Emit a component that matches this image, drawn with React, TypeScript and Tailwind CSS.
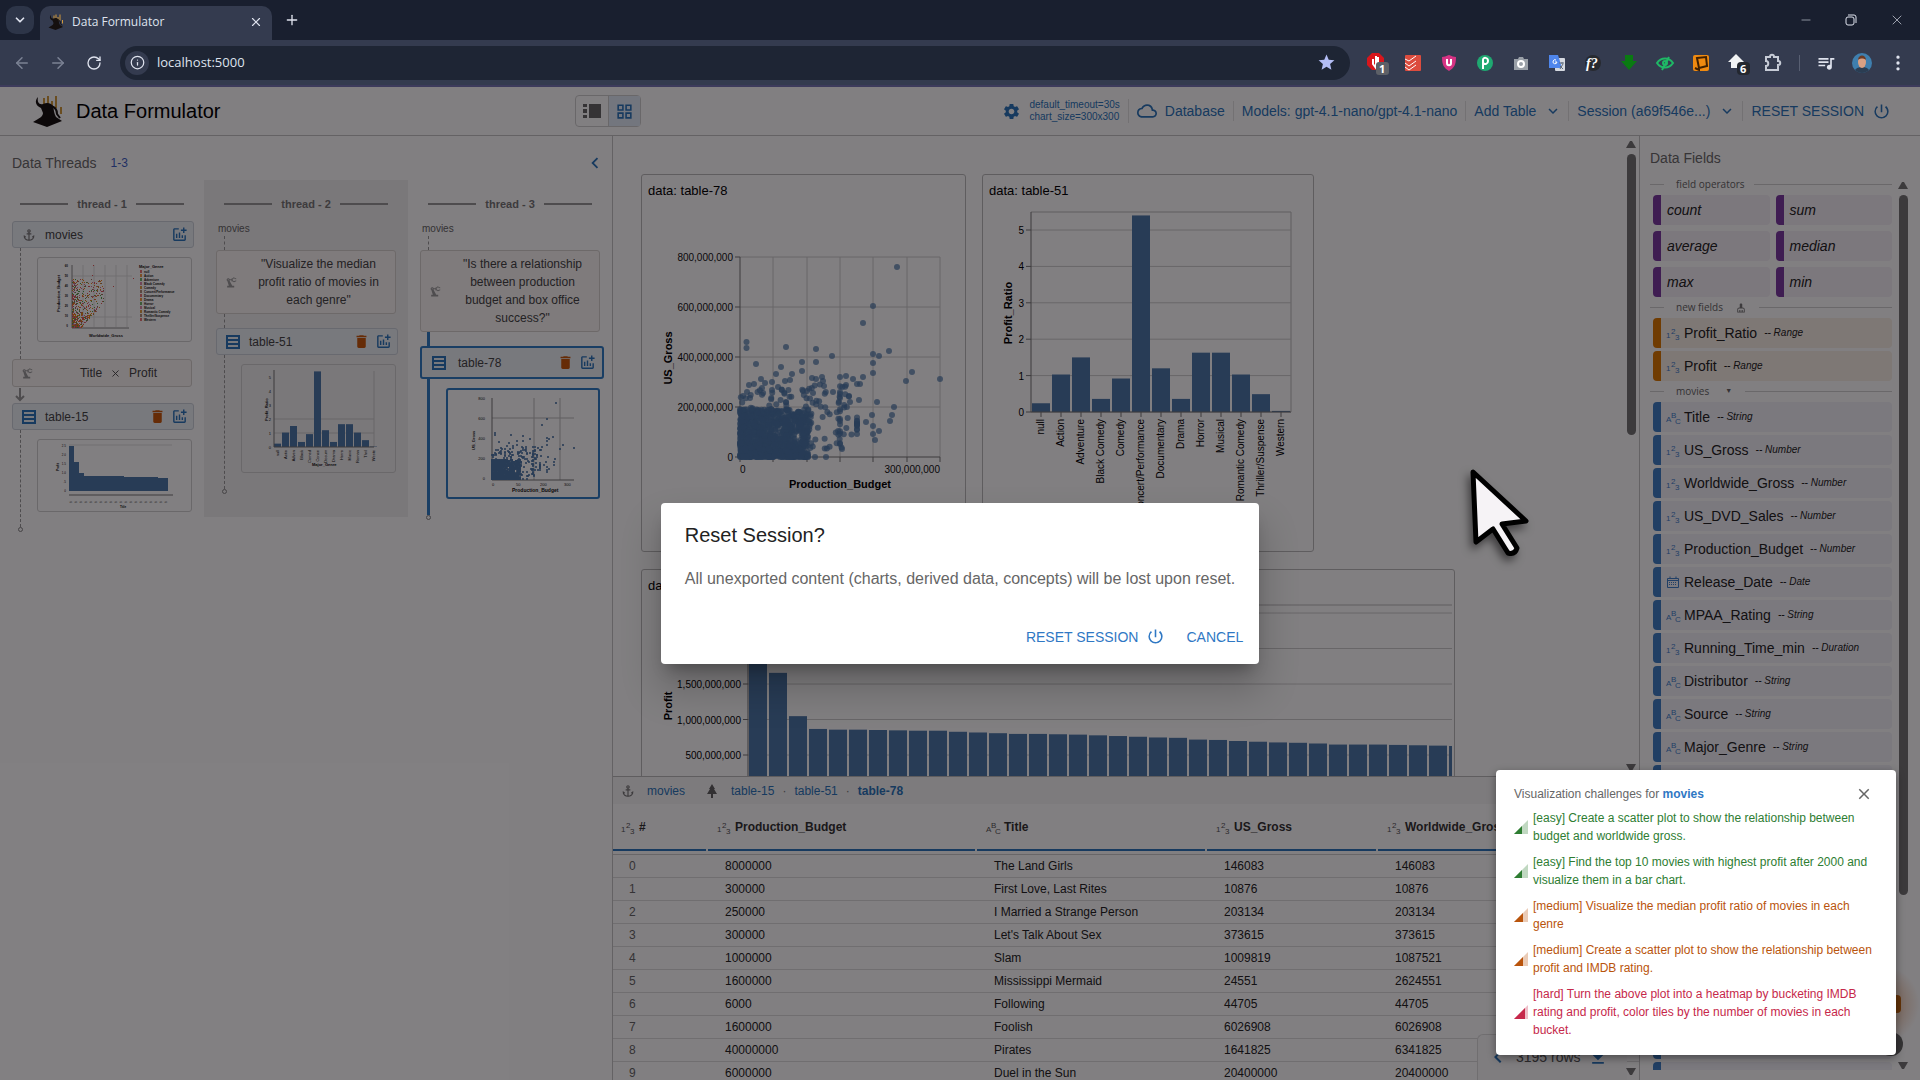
import React from 'react';
import {
  MdAddchart,
  MdAnchor,
  MdChevronLeft,
  MdCleaningServices,
  MdClose,
  MdCloudQueue,
  MdDelete,
  MdFileDownload,
  MdGridView,
  MdKeyboardArrowDown,
  MdPowerSettingsNew,
  MdPrecisionManufacturing,
  MdQueueMusic,
  MdSettings,
  MdStar,
} from 'react-icons/md';
import { ArrowLeft, ArrowRight, ChevronDown, Info, Minus, MoreVertical, Plus, RotateCw, X } from 'lucide-react';

type FieldType = 'number' | 'string' | 'date';

interface Field {
  name: string;
  hint: string;
  type: FieldType;
}

const BAR = '#4c78a8';

const movieFields: Field[] = [
  { name: 'Title', hint: 'String', type: 'string' },
  { name: 'US_Gross', hint: 'Number', type: 'number' },
  { name: 'Worldwide_Gross', hint: 'Number', type: 'number' },
  { name: 'US_DVD_Sales', hint: 'Number', type: 'number' },
  { name: 'Production_Budget', hint: 'Number', type: 'number' },
  { name: 'Release_Date', hint: 'Date', type: 'date' },
  { name: 'MPAA_Rating', hint: 'String', type: 'string' },
  { name: 'Running_Time_min', hint: 'Duration', type: 'number' },
  { name: 'Distributor', hint: 'String', type: 'string' },
  { name: 'Source', hint: 'String', type: 'string' },
  { name: 'Major_Genre', hint: 'String', type: 'string' },
];

const newFields: Field[] = [
  { name: 'Profit_Ratio', hint: 'Range', type: 'number' },
  { name: 'Profit', hint: 'Range', type: 'number' },
];

const rows = [
  ['8000000', 'The Land Girls', '146083', '146083'],
  ['300000', 'First Love, Last Rites', '10876', '10876'],
  ['250000', 'I Married a Strange Person', '203134', '203134'],
  ['300000', "Let's Talk About Sex", '373615', '373615'],
  ['1000000', 'Slam', '1009819', '1087521'],
  ['1600000', 'Mississippi Mermaid', '24551', '2624551'],
  ['6000', 'Following', '44705', '44705'],
  ['1600000', 'Foolish', '6026908', '6026908'],
  ['40000000', 'Pirates', '1641825', '6341825'],
  ['6000000', 'Duel in the Sun', '20400000', '20400000'],
];

const genres: [string, number][] = [
  ['null', 0.24], ['Action', 1.03], ['Adventure', 1.5], ['Black Comedy', 0.36], ['Comedy', 0.92],
  ['Concert/Performance', 5.4], ['Documentary', 1.2], ['Drama', 0.36], ['Horror', 1.63], ['Musical', 1.63],
  ['Romantic Comedy', 1.03], ['Thriller/Suspense', 0.49], ['Western', 0.03],
];

// billions, sorted descending
const profits = [
  2.52, 1.65, 1.04, 0.86, 0.85, 0.85, 0.845, 0.84, 0.835, 0.835, 0.82, 0.81, 0.8, 0.79, 0.79, 0.785, 0.78, 0.77,
  0.76, 0.75, 0.74, 0.735, 0.71, 0.705, 0.69, 0.68, 0.67, 0.665, 0.655, 0.64, 0.64, 0.64, 0.635, 0.63, 0.625, 0.62,
];

const challenges = [
  { level: 'easy', text: 'Create a scatter plot to show the relationship between budget and worldwide gross.' },
  { level: 'easy', text: 'Find the top 10 movies with highest profit after 2000 and visualize them in a bar chart.' },
  { level: 'medium', text: 'Visualize the median profit ratio of movies in each genre' },
  { level: 'medium', text: 'Create a scatter plot to show the relationship between profit and IMDB rating.' },
  { level: 'hard', text: 'Turn the above plot into a heatmap by bucketing IMDB rating and profit, color tiles by the number of movies in each bucket.' },
];

const levelColor: Record<string, string> = {
  easy: 'text-[#2e7d32]',
  medium: 'text-[#b9540c]',
  hard: 'text-[#c6284a]',
};

const levelWidth: Record<string, number> = { easy: 8, medium: 9, hard: 11 };

function makeRandom(seed: number) {
  let s = seed;
  return () => {
    s = (s * 16807) % 2147483647;
    return s / 2147483647;
  };
}

// points on a 200 x 200 plot, y measured from the top
const outliers = [
  [157, 10], [133, 49], [123, 66], [6.5, 85], [6.5, 91], [46, 90], [76, 92], [92, 99], [76, 105], [149, 94], [133, 97],
  [139, 99], [133, 106], [133, 116], [172, 115], [166, 124], [200, 122], [16, 107], [41, 110], [62, 105], [62, 114],
  [36, 117], [52, 117], [21, 122], [100, 120], [106, 119], [113, 122], [123, 120], [120, 127], [137, 145], [154, 150],
  [152, 158], [150, 164], [139, 174], [135, 183], [132, 158], [133, 169], [133, 177], [126, 165], [102, 192], [86, 200],
  [75, 200], [45, 124], [50, 123], [25, 126], [32, 125], [14, 127], [9, 128], [32, 133], [38, 130], [22, 131],
  [72, 121], [76, 122], [82, 120], [83, 124], [84, 129], [106, 128], [117, 127], [7, 135], [3, 139], [10, 141],
  [93, 135], [100, 135], [109, 139], [119, 143], [110, 145], [63, 134], [67, 134], [73, 136],
];

function buildScatter() {
  const rnd = makeRandom(77);
  const pts = outliers.map((p) => [...p]);
  for (let i = 0; i < 1000; i++) {
    pts.push([Math.pow(rnd(), 1.2) * 68, 200 - Math.pow(rnd(), 1.7) * 48]);
  }
  for (let i = 0; i < 110; i++) {
    pts.push([rnd() * 72, 200 - 30 - Math.pow(rnd(), 2) * 38]);
  }
  for (let i = 0; i < 55; i++) {
    pts.push([66 + Math.pow(rnd(), 1.3) * 48, 200 - 8 - rnd() * 66]);
  }
  for (let i = 0; i < 12; i++) {
    pts.push([100, 128 + rnd() * 60]);
    pts.push([117, 160 + rnd() * 18]);
  }
  return pts;
}

const scatter = buildScatter();

/* ---------- small drawings ---------- */

function WizardLogo({ size }: { size: number }) {
  return (
    <svg width={size} height={size} viewBox="0 0 32 32" aria-hidden="true">
      <g stroke="#d19a3d" strokeWidth="2" fill="none">
        <path d="M12 3v7M16 1v8M20 6v7M24 1v12M29 12v7" />
      </g>
      <path d="M6 2C2 6 4 11 9 13l2 5c0 3-3 5-5 6l-5 3 14 5 15-6-6-4c-2-3-2-7-3-11-2-3-6-4-10-2C7 10 5 7 6 2Z" fill="#15100f" />
      <path d="M19 11c4 1 6 4 6 8l3 4" stroke="#15100f" strokeWidth="2" fill="none" />
    </svg>
  );
}

function TableIcon() {
  return (
    <svg width="14" height="14" viewBox="0 0 14 14" fill="none" stroke="#2a74ba" strokeWidth="2" className="shrink-0" aria-hidden="true">
      <path d="M1 1h12v12H1ZM1 5h12M1 9h12" />
    </svg>
  );
}

function TypeIcon({ type, className }: { type: FieldType; className: string }) {
  if (type === 'date') {
    return (
      <svg width="13" height="12" viewBox="0 0 13 12" className={`shrink-0 ${className}`} fill="none" stroke="currentColor" aria-hidden="true">
        <path d="M.5 2.500h11v9H.5ZM.5 4.500h11M3 .5v2M9 .5v2" />
        <path d="M2 6.500h8M2 8.500h8" strokeDasharray="1 1" />
      </svg>
    );
  }
  const [a, b, c] = type === 'number' ? ['1', '2', '3'] : ['A', 'B', 'C'];
  return (
    <svg width="13" height="14" viewBox="0 0 13 14" className={`shrink-0 overflow-visible fill-current font-normal ${className}`} aria-hidden="true">
      <text x="-1" y="12" fontSize="8">{a}</text>
      <text x="4" y="8" fontSize="8">{b}</text>
      <text x="8" y="14" fontSize="8">{c}</text>
    </svg>
  );
}

function PineTree() {
  return (
    <svg width="12" height="14" viewBox="0 0 12 14" className="fill-[#616161]" aria-hidden="true">
      <path d="M6 0 9 5H8l3 5H7v4H5v-4H1l3-5H3Z" />
    </svg>
  );
}

function Wedge({ level }: { level: string }) {
  const w = levelWidth[level];
  return (
    <svg width="14" height="14" viewBox="0 0 14 14" className={`shrink-0 fill-current ${levelColor[level]}`} aria-hidden="true">
      <path d="M0 14 14 0v14Z" opacity="0.3" />
      <path d={`M0 14 ${w} ${14 - w}v${w}Z`} />
    </svg>
  );
}

function Triangle({ down = false }: { down?: boolean }) {
  return (
    <svg width="10" height="8" viewBox="0 0 10 8" className="shrink-0 fill-[#757575]" aria-hidden="true">
      <path d={down ? 'M0 0h10L6 7H4Z' : 'M0 8h10L6 1H4Z'} />
    </svg>
  );
}

/* ---------- browser ---------- */

function ExtensionIcons() {
  return (
    <>
      <svg width="20" height="24" viewBox="0 0 20 24" className="overflow-visible">
        <path d="M5 2h7l5 5v7l-5 5H5l-5-5V7Z" fill="#d8161c" />
        <path d="M6 8v5l3 4V5M11 6v8" stroke="#fff" strokeWidth="2" fill="none" />
        <rect x="9" y="11" width="13" height="13" rx="3" fill="#5d6067" />
        <text x="12" y="22" fontSize="11" fontWeight="700" fill="#fff">1</text>
      </svg>
      <svg width="20" height="20" viewBox="0 0 20 20">
        <rect x="2" y="2" width="16" height="16" rx="1" fill="#dc4c3e" />
        <path d="m2 6 4 2 7-5M2 10l4 3 7-5M2 14l4 3 7-5" stroke="#fff" fill="none" />
      </svg>
      <svg width="20" height="20" viewBox="0 0 20 20">
        <path d="M10 2c3 1 5 2 7 2 0 8-2 11-7 14C5 15 3 12 3 4c2 0 4-1 7-2Z" fill="#d63384" />
        <path d="M8 6v4c0 3 4 3 4 0V6" stroke="#fff" strokeWidth="2" fill="none" />
      </svg>
      <svg width="20" height="20" viewBox="0 0 20 20">
        <circle cx="10" cy="10" r="8" fill="#1fa971" />
        <path d="M8 16V7c0-3 5-3 5 1 0 3-3 4-5 2" stroke="#fff" strokeWidth="2" fill="none" />
      </svg>
      <svg width="20" height="20" viewBox="0 0 20 20">
        <path d="M3 6h4l1-2h4l1 2h4v11H3Z" fill="#9aa0a8" />
        <circle cx="10" cy="11" r="3" fill="none" stroke="#fff" strokeWidth="2" />
      </svg>
      <svg width="20" height="20" viewBox="0 0 20 20">
        <rect x="8" y="5" width="10" height="13" rx="1" fill="#d5d9e0" />
        <path d="M2 2h9l4 13H2Z" fill="#4f86ec" />
        <path d="M9 7a2 2 0 1 0 1 2H8" stroke="#fff" fill="none" />
        <path d="M12 10h5m-2-1v2m1 0-3 5m0-3 3 3" stroke="#5f6b7a" fill="none" />
      </svg>
      <svg width="20" height="20" viewBox="0 0 20 20">
        <circle cx="10" cy="10" r="8" fill="#272a30" />
        <text x="3" y="15" fontSize="14" fontStyle="italic" fontWeight="700" fill="#fff" className="font-['Liberation_Serif',serif]">f?</text>
      </svg>
      <svg width="20" height="20" viewBox="0 0 20 20">
        <path d="M6 2h8v6h4l-8 9-8-9h4Z" fill="#0a7a12" />
      </svg>
      <svg width="20" height="20" viewBox="0 0 20 20" fill="none" stroke="#1fb866" strokeWidth="2">
        <path d="M2 10c4-6 12-6 16 0-4 6-12 6-16 0ZM14 4 7 17" />
        <circle cx="10" cy="10" r="2" />
      </svg>
      <svg width="20" height="20" viewBox="0 0 20 20">
        <rect x="2" y="2" width="16" height="16" rx="2" fill="#f08a10" />
        <path d="m6 5 9-1 1 9-8 2ZM8 15v2l-4-2" stroke="#402000" strokeWidth="2" fill="none" />
      </svg>
      <svg width="20" height="24" viewBox="0 0 20 24" className="overflow-visible">
        <path d="M9 3 1 11h3v6h10v-6h3Z" fill="#f1f3f4" />
        <rect x="10" y="11" width="13" height="13" rx="4" fill="#23272f" />
        <text x="13" y="22" fontSize="11" fontWeight="700" fill="#fff">6</text>
      </svg>
      <svg width="20" height="20" viewBox="0 0 20 20" fill="none" stroke="#c6cbd6" strokeWidth="2">
        <path d="M3 4h4c0-3 4-3 4 0h4v4c3 0 3 4 0 4v5H3v-4c3 0 3-5 0-5Z" />
      </svg>
    </>
  );
}

function BrowserChrome() {
  return (
    <div className="shrink-0 bg-[#191f2f] font-['Open_Sans',sans-serif] text-[#dfe3ee]">
      <div className="flex h-10 items-center pl-[6px] pr-[15px]">
        <button aria-label="Search tabs" className="flex h-7 w-7 items-center justify-center rounded-[10px] bg-[#2d3548]">
          <ChevronDown size={14} strokeWidth={3} />
        </button>
        <div className="ml-[6px] flex h-[34px] w-[232px] items-center self-end rounded-t-[10px] bg-[#343b4f] pb-[2px] pl-2 pr-[9px]">
          <WizardLogo size={16} />
          <span className="ml-2 flex-1 text-xs">Data Formulator</span>
          <button aria-label="Close tab"><X size={14} strokeWidth={2} /></button>
        </div>
        <button aria-label="New tab" className="ml-3"><Plus size={16} /></button>
        <div className="ml-auto flex items-center gap-[31px]">
          <button aria-label="Minimize"><Minus size={14} strokeWidth={1} /></button>
          <button aria-label="Restore">
            <svg width="14" height="14" viewBox="0 0 14 14" fill="none" stroke="currentColor">
              <rect x="2" y="4" width="8" height="8" rx="2" />
              <path d="M4 2h6q2 0 2 2v6" />
            </svg>
          </button>
          <button aria-label="Close window"><X size={16} strokeWidth={1} /></button>
        </div>
      </div>
      <div className="flex h-[47px] items-center border-b-2 border-[#3d3b5c] bg-[#343b4f] pl-[13px] pr-3">
        <button aria-label="Back" className="text-[#7b8294]"><ArrowLeft size={18} strokeWidth={2} /></button>
        <button aria-label="Forward" className="ml-[18px] text-[#7b8294]"><ArrowRight size={18} /></button>
        <button aria-label="Reload" className="ml-[19px]"><RotateCw size={16} /></button>
        <div className="ml-[18px] flex h-[34px] flex-1 items-center rounded-full bg-[#1e2534] pl-[5px] pr-[14px]">
          <span className="flex h-6 w-6 items-center justify-center rounded-full bg-[#343b4f]"><Info size={15} /></span>
          <input aria-label="Address" defaultValue="localhost:5000" className="ml-2 flex-1 bg-transparent text-[13px] outline-none" />
          <MdStar size={19} className="text-[#b3bdf5]" />
        </div>
        <div className="ml-[17px] flex items-center gap-4">
          <ExtensionIcons />
          <span className="h-4 w-px bg-[#585f72]" />
          <MdQueueMusic size={20} />
          <svg width="20" height="20" viewBox="0 0 20 20">
            <circle cx="10" cy="10" r="10" fill="#3f7fae" />
            <path d="M3 17c2-4 12-4 14 0-4 4-10 4-14 0Z" fill="#2b3d52" />
            <ellipse cx="10" cy="9" rx="4" ry="6" fill="#d9a184" />
            <path d="M6 7c0-6 8-6 8 0-2-2-6-2-8 0Z" fill="#6b3b25" />
          </svg>
          <button aria-label="Menu"><MoreVertical size={20} /></button>
        </div>
      </div>
    </div>
  );
}

/* ---------- app header ---------- */

function AppHeader() {
  return (
    <header className="flex h-[49px] shrink-0 items-center border-b border-[#c4c4c4] pl-8 pr-[29px] text-sm text-[#2a74ba]">
      <WizardLogo size={32} />
      <h1 className="ml-3 w-[200px] text-xl text-black">Data Formulator</h1>
      <div className="ml-[299px] flex rounded-sm border border-[#cfcfcf]">
        <button aria-label="List view" className="flex h-[30px] w-8 items-center justify-center">
          <svg width="18" height="14" viewBox="0 0 18 14" className="fill-[#666]">
            <path d="M0 0h4v3H0zM0 5h4v4H0zM0 11h4v3H0zM6 0h12v14H6z" />
          </svg>
        </button>
        <button aria-label="Grid view" className="flex h-[30px] w-8 items-center justify-center border-l border-[#cfcfcf] bg-[#e3edf8]">
          <MdGridView size={19} />
        </button>
      </div>
      <nav className="ml-auto flex items-center">
        <button className="flex items-center gap-2 border-r border-[#e2e2e2] pr-2">
          <MdSettings size={19} />
          <span className="flex flex-col text-left text-[10px] leading-3">
            <span>default_timeout=30s</span>
            <span>chart_size=300x300</span>
          </span>
        </button>
        <button className="flex items-center gap-2 border-r border-[#e2e2e2] px-2"><MdCloudQueue size={20} />Database</button>
        <button className="border-r border-[#e2e2e2] px-2">Models: gpt-4.1-nano/gpt-4.1-nano</button>
        <button className="flex items-center gap-2 border-r border-[#e2e2e2] pl-2 pr-[6px]">Add Table<MdKeyboardArrowDown size={18} /></button>
        <button className="flex items-center gap-2 border-r border-[#e2e2e2] pl-2 pr-[6px]">Session (a69f546e...)<MdKeyboardArrowDown size={18} /></button>
        <button className="flex items-center gap-2 pl-2">RESET SESSION<MdPowerSettingsNew size={19} /></button>
      </nav>
    </header>
  );
}

/* ---------- threads ---------- */

function ThreadLabel({ n }: { n: number }) {
  return (
    <div className="mx-2 flex h-4 items-center gap-[9px] text-[11px] font-bold text-[#777]">
      <span className="h-[2px] flex-1 bg-[#999]" />
      {`thread - ${n}`}
      <span className="h-[2px] flex-1 bg-[#999]" />
    </div>
  );
}

function TableCard({ name, source = false, active = false }: { name: string; source?: boolean; active?: boolean }) {
  return (
    <div
      className={`flex items-center rounded-[3px] bg-[#edf2f7] text-xs text-[#444] ${
        active ? 'h-[33px] w-[184px] border-2 border-[#2f7cc4] pl-[10px] pr-[6px]' : 'h-[27px] w-[182px] border border-[#ccd2da] pl-[9px] pr-[5px]'
      }`}
    >
      {source ? <MdAnchor size={14} className="text-[#777]" /> : <TableIcon />}
      <span className={`flex-1 ${active ? 'ml-[12px]' : 'ml-[9px]'}`}>{name}</span>
      {!source && <button aria-label={`Delete ${name}`}><MdDelete size={17} className="text-[#c8590a]" /></button>}
      <button aria-label={`New chart from ${name}`} className="ml-[5px]"><MdAddchart size={17} className="text-[#2a74ba]" /></button>
    </div>
  );
}

function PromptCard({ children }: { children: React.ReactNode }) {
  return (
    <div className="flex w-[180px] items-center rounded-[3px] border border-[#d6d2ce] bg-[#faf7f5] py-[4px] pl-[8px] pr-2 text-xs leading-[18px] text-[#444]">
      <MdPrecisionManufacturing size={13} className="shrink-0 text-[#9a9a9a]" />
      <span className="flex-1 pl-3 text-center">{children}</span>
    </div>
  );
}

function EndDot() {
  return <span className="ml-[6px] block h-[5px] w-[5px] rounded-full border border-[#888]" />;
}

function MiniGenreScatter() {
  const rnd = makeRandom(19);
  const colors = ['#e45756', '#f58518', '#54a24b', '#d67195', '#d98a1b', '#9d755d'];
  const pts = Array.from({ length: 650 }, () => {
    const h = Math.pow(rnd(), 1.5);
    return [Math.pow(rnd(), 1.8) * (9 + 22 * Math.min(h * 2, 1)), 69 - h * 48, colors[Math.floor(rnd() * 6)]] as const;
  });
  return (
    <svg width="153" height="83" viewBox="0 0 153 83">
      <g stroke="#ddd">
        <path d="M45 7v62M56 7v62M67 7v62M78 7v62M89 7v62M34 18h60M34 59h60" />
      </g>
      <path d="M34 7v63h57" stroke="#888" fill="none" />
      {pts.map(([x, y, c], i) => <rect key={i} x={Math.round(34 + x)} y={Math.round(y)} width="1" height="1" fill={c} />)}
      <g fill="#e45756"><path d="M55 7h1v1h-1zM54 17h1v1h-1zM75 28h1v1h-1zM95 20h1v1h-1zM42 21h1v1h-1zM56 24h1v1h-1z" /></g>
      <g fontSize="3" fontWeight="700" fill="#111">
        <text x="101" y="10" fontSize="4">Major_Genre</text>
        <text x="51" y="79" fontSize="4">Worldwide_Gross</text>
        <text transform="translate(22 54) rotate(-90)" fontSize="4">Production_Budget</text>
        {[60, 50, 40, 30, 20, 10, 0].map((v, i) => <text key={v} x="30" y={9 + i * 10} textAnchor="end">{v}</text>)}
        {genres.map(([g], i) => <text key={g} x="106" y={15 + i * 4}>{g}</text>)}
      </g>
      {genres.map(([g], i) => <rect key={g} x="102" y={12 + i * 4} width="2" height="3" fill={colors[i % 6]} opacity="0.8" />)}
    </svg>
  );
}

function MiniProfit() {
  return (
    <svg width="153" height="71" viewBox="0 0 153 71">
      <path d="M31 5h103" stroke="#ddd" />
      {[45, 29, 18].map((h, i) => <rect key={i} x={31 + i * 5} y={51 - h} width="5" height={h} fill={BAR} />)}
      <path d="M46 36h40v1h34v1h10v13H46Z" fill={BAR} />
      <path d="M31 55h104" stroke="#777" fill="none" />
      <g fontSize="3" fill="#111">
        <text transform="translate(21 31) rotate(-90)" fontWeight="700">Profit</text>
        {['2.5', '2.0', '1.5', '1.0', '.5', '0'].map((v, i) => <text key={v} x="28" y={7 + i * 9} textAnchor="end">{v}</text>)}
        {Array.from({ length: 20 }, (_, i) => <text key={i} transform={`translate(${34 + i * 5} 63) rotate(-90)`}>ti</text>)}
        <text x="82" y="68" fontWeight="700">Title</text>
      </g>
    </svg>
  );
}

function MiniGenreBars() {
  return (
    <svg width="153" height="107" viewBox="0 0 153 107">
      <path d="M32 68h100M32 54h100M132 6v76" stroke="#ccc" />
      {genres.map(([g, v], i) => <rect key={g} x={32 + i * 8} y={82 - v * 14} width="7" height={v * 14} fill={BAR} />)}
      <path d="M32 5v77h100" stroke="#777" fill="none" />
      <g fontSize="4" fill="#111">
        {[0, 1, 2, 3, 4, 5].map((v) => <text key={v} x="29" y={84 - v * 14} textAnchor="end">{v}</text>)}
        {genres.map(([g], i) => <text key={g} transform={`translate(${37 + i * 8} 85) rotate(-90)`} textAnchor="end">{g.slice(0, 5)}</text>)}
        <text transform="translate(26 56) rotate(-90)" fontWeight="700">Profit_Ratio</text>
        <text x="70" y="101" fontWeight="700">Major_Genre</text>
      </g>
    </svg>
  );
}

function MiniScatter() {
  return (
    <svg width="150" height="107" viewBox="0 0 150 107">
      <path d="M44 28h82M86 8v82M112 8v82" stroke="#bbb" />
      <path d="M44 8v82h82" stroke="#777" fill="none" />
      <g fill={BAR}>
        {scatter.map(([x, y], i) => <rect key={i} x={Math.round(43 + x * 0.41)} y={Math.round(8 + y * 0.4)} width="2" height="2" opacity="0.8" />)}
      </g>
      <g fontSize="4" fill="#111">
        {['800', '600', '400', '200', '0'].map((v, i) => <text key={v} x="37" y={10 + i * 20} textAnchor="end">{v}</text>)}
        {['0', '50', '200', '300'].map((v, i) => <text key={v} x={44 + i * 24} y="96">{v}</text>)}
        <text transform="translate(27 60) rotate(-90)" fontWeight="700">US_Gross</text>
        <text x="64" y="102" fontSize="5" fontWeight="700">Production_Budget</text>
      </g>
    </svg>
  );
}

function DataThreads() {
  return (
    <aside className="flex w-[613px] shrink-0 flex-col border-r border-[#c4c4c4]">
      <div className="flex h-11 items-center pl-3 pr-[6px] pt-[10px] text-sm">
        <h2 className="text-[#6a6a6a]">Data Threads</h2>
        <a href="#threads" className="ml-[14px] text-xs text-[#3f5fc4]">1-3</a>
        <button aria-label="Collapse threads" className="ml-auto text-[#2a74ba]"><MdChevronLeft size={22} /></button>
      </div>
      <div className="flex items-start">
        <section className="w-[204px] px-3 pt-4">
          <ThreadLabel n={1} />
          <div className="h-[9px]" />
          <TableCard name="movies" source />
          <div className="ml-2 border-l border-dashed border-[#999] pb-[17px] pl-4 pt-[9px]">
            <div className="h-[85px] w-[155px] rounded-[3px] border border-[#d0d0d0]"><MiniGenreScatter /></div>
          </div>
          <PromptCard>
            <span className="flex items-center justify-center gap-2 pl-2"><span>Title</span><X size={11} strokeWidth={2} /><span>Profit</span></span>
          </PromptCard>
          <svg width="17" height="16" viewBox="0 0 17 16" fill="none" stroke="#999" strokeWidth="2">
            <path d="M8 1v12M4 9l4 4 4-4" />
          </svg>
          <TableCard name="table-15" />
          <div className="ml-2 border-l border-dashed border-[#999] pb-[15px] pl-4 pt-[9px]">
            <div className="h-[73px] w-[155px] rounded-[3px] border border-[#d0d0d0]"><MiniProfit /></div>
          </div>
          <EndDot />
        </section>

        <section className="h-[337px] w-[204px] bg-[#f0f0f0] px-3 pt-4">
          <ThreadLabel n={2} />
          <a href="#movies" className="mt-[9px] block h-[15px] pl-[2px] text-[10px] leading-4 text-[#666]">movies</a>
          <div className="ml-2 h-[14px] border-l border-dashed border-[#999]" />
          <PromptCard>&quot;Visualize the median profit ratio of movies in each genre&quot;</PromptCard>
          <div className="ml-2 h-[14px] border-l border-dashed border-[#999]" />
          <TableCard name="table-51" />
          <div className="ml-2 border-l border-dashed border-[#999] pb-[16px] pl-4 pt-[9px]">
            <div className="h-[109px] w-[155px] rounded-[3px] border border-[#d0d0d0]"><MiniGenreBars /></div>
          </div>
          <EndDot />
        </section>

        <section className="w-[204px] pl-3 pt-4">
          <div className="pr-3"><ThreadLabel n={3} /></div>
          <a href="#movies" className="mt-[9px] block h-[15px] pl-[2px] text-[10px] leading-4 text-[#666]">movies</a>
          <div className="ml-2 h-[14px] border-l border-dashed border-[#999]" />
          <PromptCard>&quot;Is there a relationship between production budget and box office success?&quot;</PromptCard>
          <div className="ml-[7px] h-[14px] border-l-[3px] border-[#2f7cc4]" />
          <TableCard name="table-78" active />
          <div className="ml-[7px] border-l-[3px] border-[#2f7cc4] pb-[16px] pl-4 pt-[9px]">
            <div className="h-[111px] w-[154px] rounded-[3px] border-2 border-[#2f7cc4]"><MiniScatter /></div>
          </div>
          <EndDot />
        </section>
      </div>
    </aside>
  );
}

/* ---------- charts ---------- */

function ScatterChart() {
  return (
    <svg width="305" height="330" viewBox="0 0 305 330">
      <g transform="translate(92 54)">
        <g stroke="#ccc">
          {[0, 50, 100, 150].map((y) => <path key={y} d={`M0 ${y}h200`} />)}
          {[33, 67, 100, 133, 167, 200].map((x) => <path key={x} d={`M${x} 0v200`} />)}
        </g>
        <g stroke="#777">
          {[0, 50, 100, 150, 200].map((y) => <path key={y} d={`M-5 ${y}h5`} />)}
          {[0, 33, 67, 100, 133, 167, 200].map((x) => <path key={x} d={`M${x} 200v5`} />)}
          <path d="M0 0v200h200" fill="none" />
        </g>
        <g fill={BAR} fillOpacity="0.7">
          {scatter.map(([x, y], i) => <circle key={i} cx={x} cy={y} r="3" />)}
        </g>
        <g fontSize="10" fill="#111">
          {['800,000,000', '600,000,000', '400,000,000', '200,000,000', '0'].map((t, i) => (
            <text key={t} x="-7" y={4 + i * 50} textAnchor="end">{t}</text>
          ))}
          <text x="0" y="216">0</text>
          <text x="200" y="216" textAnchor="end">300,000,000</text>
        </g>
        <g fontSize="11" fontWeight="700" textAnchor="middle">
          <text x="100" y="231">Production_Budget</text>
          <text transform="translate(-68 101) rotate(-90)">US_Gross</text>
        </g>
      </g>
    </svg>
  );
}

function GenreChart() {
  return (
    <svg width="310" height="330" viewBox="0 0 310 330">
      <g transform="translate(42 9)">
        <path d="M0 0h260v200" stroke="#bbb" fill="none" />
        {[0, 1, 2, 3, 4, 5].map((v) => (
          <g key={v}>
            <path d={`M0 ${200 - v * 36.4}h260`} stroke="#ccc" />
            <path d={`M-5 ${200 - v * 36.4}h5`} stroke="#777" />
            <text x="-7" y={204 - v * 36.4} fontSize="10" textAnchor="end">{v}</text>
          </g>
        ))}
        {genres.map(([g, v], i) => (
          <g key={g}>
            <rect x={1 + i * 20} y={200 - v * 36.4} width="18" height={v * 36.4} fill={BAR} />
            <path d={`M${10 + i * 20} 200v5`} stroke="#777" />
            <text transform={`translate(${13 + i * 20} 207) rotate(-90)`} fontSize="10" textAnchor="end">{g}</text>
          </g>
        ))}
        <path d="M0 0v200h260" stroke="#777" fill="none" />
        <text transform="translate(-19 101) rotate(-90)" fontSize="11" fontWeight="700" textAnchor="middle">Profit_Ratio</text>
      </g>
    </svg>
  );
}

function ProfitChart() {
  const labels = ['500,000,000', '1,000,000,000', '1,500,000,000', '2,000,000,000', '2,500,000,000'];
  return (
    <svg width="804" height="260" viewBox="0 0 804 260">
      <g transform="translate(100 7)">
        <path d="M0 0h704" stroke="#bbb" />
        {labels.map((t, i) => (
          <g key={t}>
            <path d={`M0 ${150 - i * 35.5}h704`} stroke="#ccc" />
            <path d={`M-5 ${150 - i * 35.5}h5`} stroke="#777" />
            <text x="-7" y={154 - i * 35.5} fontSize="10" textAnchor="end">{t}</text>
          </g>
        ))}
        {profits.map((v, i) => <rect key={i} x={1 + i * 20} y={185 - v * 71} width="18" height={v * 71} fill={BAR} />)}
        <path d="M0 0v185h704" stroke="#777" fill="none" />
        <text transform="translate(-76 101) rotate(-90)" fontSize="11" fontWeight="700" textAnchor="middle">Profit</text>
      </g>
    </svg>
  );
}

function ChartCard({ table, className, children }: { table: string; className: string; children: React.ReactNode }) {
  return (
    <article className={`overflow-hidden rounded-[3px] border border-[#bbb] pl-[6px] pt-1 ${className}`}>
      <h3 className="flex h-6 items-center pb-px text-[13px] text-black">{`data: ${table}`}</h3>
      {children}
    </article>
  );
}

/* ---------- data table ---------- */

const columns: { name: string; type: FieldType; width: string }[] = [
  { name: '#', type: 'number', width: 'w-[95px]' },
  { name: 'Production_Budget', type: 'number', width: 'w-[269px]' },
  { name: 'Title', type: 'string', width: 'w-[230px]' },
  { name: 'US_Gross', type: 'number', width: 'w-[171px]' },
  { name: 'Worldwide_Gross', type: 'number', width: '' },
];

function DataTable() {
  return (
    <section className="relative h-[304px] shrink-0 overflow-hidden border-t border-[#bbb] text-xs">
      <nav className="flex h-[27px] items-center bg-[#f7f7f7] pl-2 text-[#2a74ba]">
        <MdAnchor size={14} className="text-[#777]" />
        <a href="#movies" className="ml-3">movies</a>
        <span className="ml-[21px] mr-[13px]"><PineTree /></span>
        <a href="#t15">table-15</a>
        <span className="w-5 text-center text-[#777]">·</span>
        <a href="#t51">table-51</a>
        <span className="w-5 text-center text-[#777]">·</span>
        <a href="#t78" className="font-bold">table-78</a>
      </nav>
      <table className="w-full table-fixed border-collapse">
        <thead>
          <tr className="border-b border-[#ccc]">
            {columns.map((c, i) => (
              <th key={c.name} className={`p-0 pb-[3px] text-left ${c.width}`}>
                <span className={`mr-[2px] flex h-[47px] items-center gap-1 border-b-2 border-[#2a74ba] text-[#333] ${i === 0 ? 'pl-[9px]' : 'pl-[10px]'}`}>
                  <TypeIcon type={c.type} className="text-[#555]" />
                  {c.name}
                </span>
              </th>
            ))}
          </tr>
        </thead>
        <tbody>
          {rows.map((row, i) => (
            <tr key={i} className="h-[23px] border-b border-[#dcdcdc] text-[#222]">
              <td className="pl-4 text-[#666]">{i}</td>
              {row.map((cell, j) => <td key={j} className="pl-[17px]">{cell}</td>)}
            </tr>
          ))}
        </tbody>
      </table>
      <div className="absolute bottom-0 right-3 flex h-[46px] w-[150px] items-center rounded-tl-md border-l border-t border-[#ddd] bg-[#fbfbfb] pb-[2px] pl-2 text-sm text-[#555]">
        <MdChevronLeft size={24} className="text-[#2a74ba]" />
        <span className="ml-[6px]">3195 rows</span>
        <button aria-label="Download rows" className="ml-[7px]"><MdFileDownload size={20} className="text-[#2a74ba]" /></button>
      </div>
      <div className="absolute bottom-1 right-[3px]"><Triangle down /></div>
    </section>
  );
}

/* ---------- fields ---------- */

function Divider({ label, children }: { label: string; children?: React.ReactNode }) {
  return (
    <div className="flex h-[21px] items-center text-[10px] text-[#666]">
      <span className="h-px w-[14px] bg-[#d0d0d0]" />
      <span className="ml-3 font-['Open_Sans',sans-serif]">{label}</span>
      {children}
      <span className="ml-[9px] h-px flex-1 bg-[#d0d0d0]" />
    </div>
  );
}

function FieldCard({ field, tone }: { field: Field; tone: 'new' | 'source' }) {
  return (
    <li
      className={`ml-[3px] flex h-[30px] items-center rounded-[4px] border-l-8 pb-px pl-[6px] text-[#222] ${
        tone === 'new' ? 'border-[#dd7800] bg-[#f8f0e6]' : 'border-[#3f7fc4] bg-[#f3f3f9]'
      }`}
    >
      <TypeIcon type={field.type} className="text-[#3f7fc9]" />
      <span className="ml-1 text-sm">{field.name}</span>
      <span className="ml-[7px] text-[10px] italic">{`-- ${field.hint}`}</span>
    </li>
  );
}

function DataFields() {
  return (
    <aside className="relative flex w-[281px] shrink-0 flex-col border-l border-[#c4c4c4] pl-[10px]">
      <h2 className="flex h-[38px] items-center pt-[6px] text-sm text-[#6a6a6a]">Data Fields</h2>
      <div className="flex min-h-0 flex-1 pb-[10px]">
        <div className="w-[242px] overflow-hidden">
          <Divider label="field operators" />
          <ul className="ml-[3px] grid grid-cols-2 gap-[6px]">
            {['count', 'sum', 'average', 'median', 'max', 'min'].map((op) => (
              <li key={op} className="flex h-[30px] items-center rounded-[4px] border-l-8 border-[#7b3aa0] bg-[#f5f0f6] pb-px pl-[6px] text-sm italic text-[#222]">{op}</li>
            ))}
          </ul>
          <Divider label="new fields">
            <MdCleaningServices size={10} className="ml-[13px] mr-1 text-[#777]" />
          </Divider>
          <ul className="flex flex-col gap-[3px]">
            {newFields.map((f) => <FieldCard key={f.name} field={f} tone="new" />)}
          </ul>
          <Divider label="movies">
            <span className="ml-4 mr-1 text-[7px]">▼</span>
          </Divider>
          <ul className="flex flex-col gap-[3px]">
            {movieFields.map((f) => <FieldCard key={f.name} field={f} tone="source" />)}
            {Array.from({ length: 10 }, (_, i) => (
              <li key={i} className="ml-[3px] h-[30px] shrink-0 rounded-[4px] border-l-8 border-[#3f7fc4] bg-[#f3f3f9]" />
            ))}
          </ul>
        </div>
        <div className="ml-[6px] flex w-[10px] flex-col items-center gap-[6px] pt-[7px]">
          <Triangle />
          <span className="h-[700px] w-[9px] rounded-full bg-[#757575]" />
          <span className="mt-auto"><Triangle down /></span>
        </div>
      </div>
      {/* floating assistant buttons, tucked under the challenges popup */}
      <div className="absolute bottom-[36px] right-0 flex h-20 w-20 items-center justify-center rounded-full bg-[radial-gradient(circle,#f5dccb_40%,#ffffff00_70%)]">
        <span className="h-[18px] w-[42px] rounded-sm bg-[#c0640c]" />
      </div>
      <span className="absolute bottom-6 right-[17px] h-6 w-6 rounded-full bg-[#666]" />
    </aside>
  );
}

/* ---------- overlays ---------- */

function ResetDialog() {
  return (
    <div role="dialog" aria-labelledby="reset-title" className="rounded-[4px] bg-white shadow-[0_11px_15px_-7px_rgba(0,0,0,0.3),0_24px_38px_3px_rgba(0,0,0,0.2)]">
      <h2 id="reset-title" className="px-6 pb-4 pt-4 text-xl leading-8 text-[#222]">Reset Session?</h2>
      <p className="px-6 pb-[19px] text-base leading-6 text-[#666]">
        All unexported content (charts, derived data, concepts) will be lost upon reset.
      </p>
      <div className="flex h-[54px] items-center justify-end gap-[21px] pb-px pr-4 text-sm text-[#2f78c4]">
        <button className="flex items-center gap-2">RESET SESSION<MdPowerSettingsNew size={19} /></button>
        <button>CANCEL</button>
      </div>
    </div>
  );
}

function ChallengesPopup() {
  return (
    <div className="absolute bottom-[25px] right-6 w-[400px] rounded-[4px] bg-white pb-4 pl-[18px] pr-5 pt-3 text-xs leading-[18px] shadow-[0_3px_8px_rgba(0,0,0,0.4)]">
      <div className="flex h-6 items-center justify-between pr-[3px] text-[#666]">
        <span>Visualization challenges for <b className="text-[#2f78c4]">movies</b></span>
        <button aria-label="Close challenges"><MdClose size={18} /></button>
      </div>
      <ul className="mt-[3px] flex flex-col gap-2">
        {challenges.map((c) => (
          <li key={c.text} className="flex items-center gap-[5px]">
            <Wedge level={c.level} />
            <a href="#challenge" className={levelColor[c.level]}>{`[${c.level}] ${c.text}`}</a>
          </li>
        ))}
      </ul>
    </div>
  );
}

function Pointer() {
  return (
    <svg width="76" height="96" viewBox="0 0 76 96" className="pointer-events-none absolute left-[1464px] top-[462px] drop-shadow-[-3px_5px_4px_rgba(0,0,0,0.5)]" aria-hidden="true">
      <path d="M9 10 62 59 38 62 53 86Q51 93 44 91L29 67 12 80Z" fill="#f6f3f6" stroke="#000" strokeWidth="5" strokeLinejoin="round" />
    </svg>
  );
}

export default function App() {
  return (
    <div className="relative flex h-screen flex-col overflow-hidden bg-white font-['Liberation_Sans',Arial,sans-serif]">
      <BrowserChrome />
      <div className="relative flex min-h-0 flex-1 flex-col">
        <AppHeader />
        <div className="flex min-h-0 flex-1">
          <DataThreads />
          <main className="flex min-w-0 flex-1 flex-col">
            <div className="flex min-h-0 flex-1">
              <div className="flex flex-1 flex-wrap content-start gap-x-4 gap-y-[17px] overflow-hidden pl-[28px] pt-[38px]">
                <ChartCard table="table-78" className="h-[378px] w-[325px]"><ScatterChart /></ChartCard>
                <ChartCard table="table-51" className="h-[378px] w-[332px]"><GenreChart /></ChartCard>
                <ChartCard table="table-15" className="h-[378px] w-[814px]"><ProfitChart /></ChartCard>
              </div>
              <div className="flex w-4 flex-col items-center gap-[6px] py-1">
                <Triangle />
                <span className="h-[281px] w-[9px] rounded-full bg-[#757575]" />
                <span className="mt-auto"><Triangle down /></span>
              </div>
            </div>
            <DataTable />
          </main>
          <DataFields />
        </div>
        <div className="absolute inset-0 flex items-center justify-center bg-[#040004]/50">
          <ResetDialog />
        </div>
        <ChallengesPopup />
      </div>
      <Pointer />
    </div>
  );
}
